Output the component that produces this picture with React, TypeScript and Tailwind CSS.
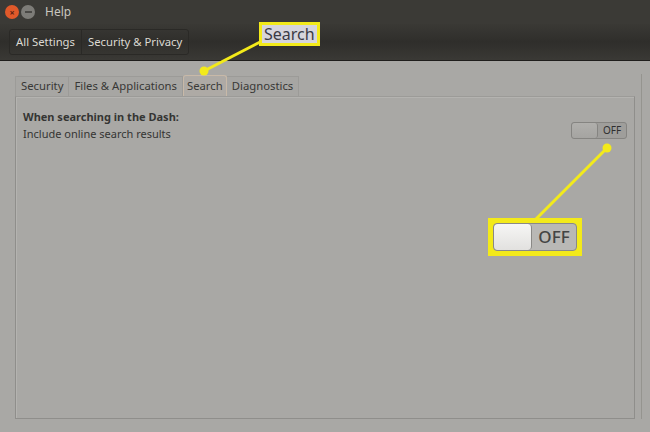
import React from "react"

const font = { fontFamily: '"Noto Sans", "DejaVu Sans", sans-serif' }

function Toggle({ big = false }: { big?: boolean }) {
  return (
    <div
      className={
        big
          ? "flex h-[28px] w-[84px] rounded-[4px] border border-[#8a8986] bg-[#b9b8b5] overflow-hidden"
          : "flex h-[17px] w-[56px] rounded-[3px] border border-[#858481] bg-[#9f9e9b] overflow-hidden"
      }
    >
      <div
        className={
          big
            ? "w-[38px] h-full rounded-[4px] border-r border-[#8a8986] bg-gradient-to-b from-[#f6f6f5] to-[#e2e1df]"
            : "w-[26px] h-full rounded-[3px] border-r border-[#858481] bg-gradient-to-b from-[#b0afac] to-[#a5a4a1]"
        }
      />
      <div
        className={
          big
            ? "flex-1 flex items-center justify-center text-[17px] font-medium text-[#444443]"
            : "flex-1 flex items-center justify-center text-[10px] text-[#2f2f2f]"
        }
      >
        OFF
      </div>
    </div>
  )
}

export default function App() {
  const tabs = ["Security", "Files & Applications", "Search", "Diagnostics"]
  return (
    <div style={font} className="relative w-[650px] h-[432px] bg-[#a9a8a5] overflow-hidden flex flex-col">
      {/* Title bar */}
      <div className="h-[24px] flex items-center gap-[2px] pl-[5px] bg-[#3b3a36]">
        <div className="w-[14px] h-[14px] rounded-full bg-[#e0592a] flex items-center justify-center text-[9px] leading-none text-[#5c2010] font-bold">
          ×
        </div>
        <div className="w-[14px] h-[14px] rounded-full bg-[#7d7c78] flex items-center justify-center">
          <div className="w-[7px] h-[2px] bg-[#4a4946]" />
        </div>
        <span className="ml-[8px] text-[12px] text-[#c9c6bf]">Help</span>
      </div>

      {/* Toolbar */}
      <div className="h-[37px] flex items-center pl-[9px] bg-gradient-to-b from-[#3a3935] via-[#2f2e2b] to-[#3a3935] border-b border-[#1f1e1c]">
        <div className="flex h-[26px] rounded-[3px] border border-[#2a2926] text-[11.3px] text-[#dcd9d2]">
          <div className="px-[6px] flex items-center border-r border-[#2a2926]">All Settings</div>
          <div className="px-[6px] flex items-center">Security &amp; Privacy</div>
        </div>
      </div>

      {/* Content */}
      <div className="flex-1 flex pl-[15px] pr-[8px] pt-[13px] pb-[13px]">
        <div className="flex-1 flex flex-col mr-[6px]">
          <div className="flex items-end h-[22px] text-[11.3px] text-[#383836]">
            {tabs.map((t) =>
              t === "Search" ? (
                <div
                  key={t}
                  className="h-[21px] px-[3px] flex items-center rounded-t-[3px] border border-b-0 border-[#c8b9a8] bg-[#aeaaa5] text-[#3a3a38]"
                >
                  {t}
                </div>
              ) : (
                <div
                  key={t}
                  className="h-[20px] px-[5px] flex items-center border-r border-t border-[#9c9b98] first:border-l bg-[#a7a6a3]"
                >
                  {t}
                </div>
              )
            )}
          </div>
          <div className="flex-1 border border-[#8f8e8b] border-t-[#9c9b98] bg-[#a9a8a5] pl-[7px] pr-[7px] pt-[12px] shadow-[inset_1px_1px_0_#b4b3b0]">
            <div className="text-[11px] font-bold text-[#353533]">When searching in the Dash:</div>
            <div className="flex items-center justify-between">
              <span className="text-[11px] text-[#353533]">Include online search results</span>
              <div className="-mt-[6px]">
                <Toggle />
              </div>
            </div>
          </div>
        </div>
        <div className="w-[1px] bg-[#95948f]" />
      </div>

      {/* Callout lines */}
      <svg className="absolute inset-0 pointer-events-none" width="650" height="432">
        <line x1="264" y1="40" x2="204" y2="71" stroke="#f3ea1a" strokeWidth="3" />
        <circle cx="204" cy="71" r="4.5" fill="#f3ea1a" />
        <line x1="607" y1="148" x2="535" y2="220" stroke="#f3ea1a" strokeWidth="3" />
        <circle cx="607" cy="148" r="4.5" fill="#f3ea1a" />
      </svg>

      {/* Search callout */}
      <div className="absolute left-[259px] top-[22px] border-[3px] border-[#f3ea1a] bg-[#d6d5dc] px-[2px] h-[24px] flex items-center text-[16px] text-[#3b3b45]">
        Search
      </div>

      {/* Toggle callout */}
      <div className="absolute left-[488px] top-[218px] border-[4px] border-[#f3ea1a] bg-[#f3ea1a] p-[1px]">
        <Toggle big />
      </div>
    </div>
  )
}
